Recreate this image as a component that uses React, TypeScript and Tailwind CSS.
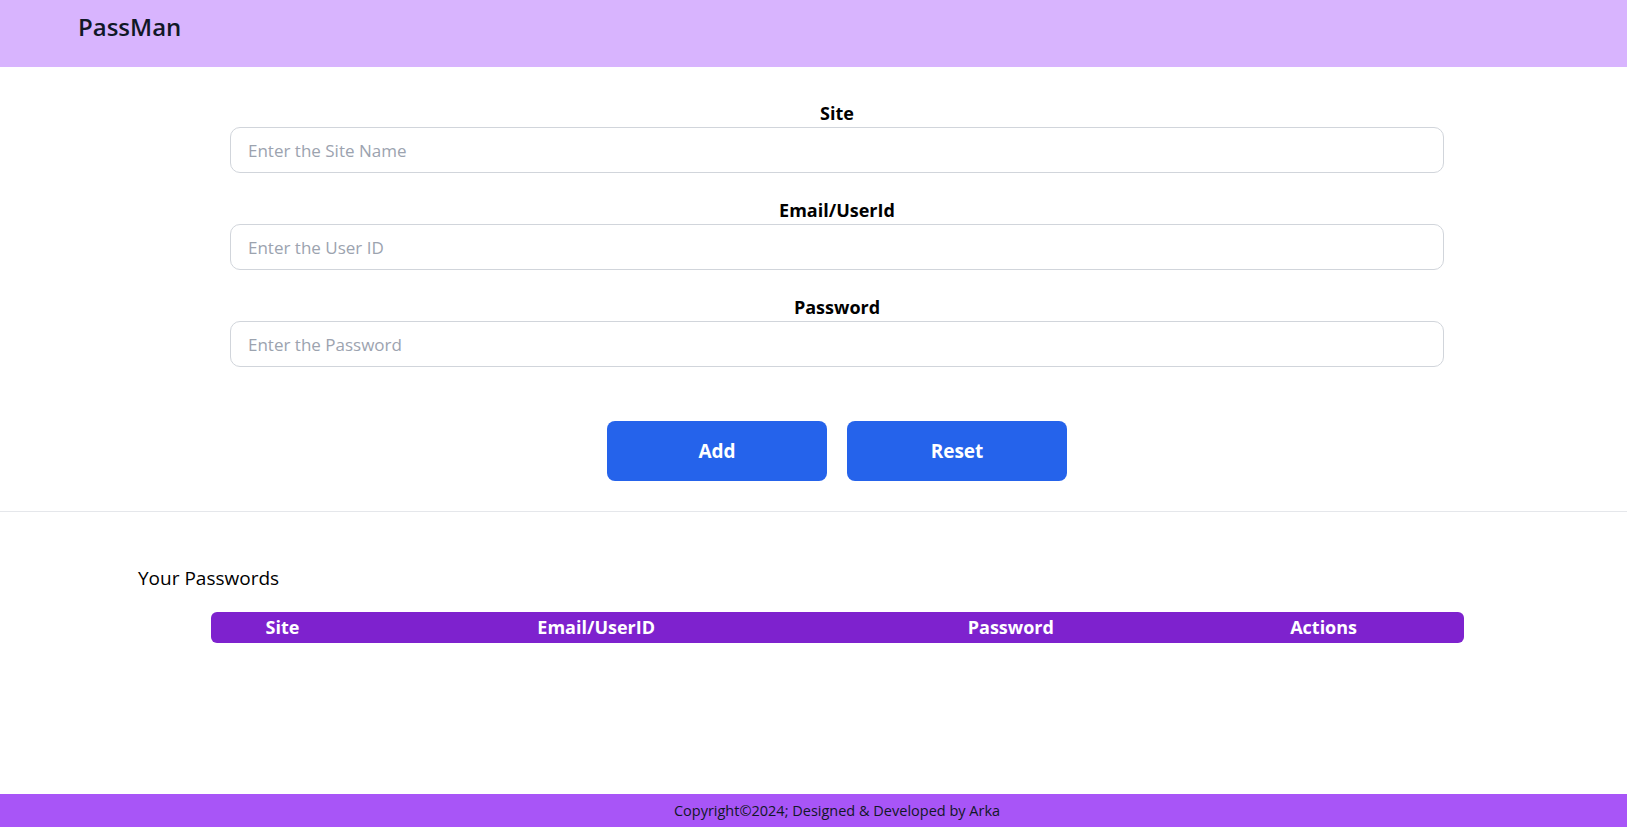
import { useState } from 'react'

const font = { fontFamily: '"Open Sans", "Noto Sans", Arial, sans-serif' }

function Field({
  label,
  placeholder,
  value,
  onChange,
  type = 'text'
}: {
  label: string
  placeholder: string
  value: string
  onChange: (v: string) => void
  type?: string
}) {
  return (
    <div className="flex w-full flex-col items-center">
      <label className="text-[18px] leading-[28px] font-bold text-black">{label}</label>
      <input
        type={type}
        value={value}
        placeholder={placeholder}
        onChange={(e) => onChange(e.target.value)}
        className="h-[46px] w-full rounded-[10px] border border-[#d1d5db] bg-white px-[17px] text-[17px] text-gray-800 outline-none placeholder:text-[#9ca3af]"
      />
    </div>
  )
}

export default function App() {
  const [site, setSite] = useState('')
  const [user, setUser] = useState('')
  const [pass, setPass] = useState('')

  const reset = () => {
    setSite('')
    setUser('')
    setPass('')
  }

  return (
    <div className="flex min-h-[827px] flex-col bg-white text-black" style={font}>
      <nav className="flex h-[67px] shrink-0 items-start bg-[#d8b4fe] pl-[78px] pt-[9px]">
        <span className="text-[24px] font-semibold text-[#111827]">PassMan</span>
      </nav>

      <main className="flex flex-1 flex-col">
        <div className="flex justify-center pl-[47px] pt-[32px]">
          <div className="flex w-[1214px] flex-col gap-[23px]">
            <Field label="Site" placeholder="Enter the Site Name" value={site} onChange={setSite} />
            <Field label="Email/UserId" placeholder="Enter the User ID" value={user} onChange={setUser} />
            <Field
              label="Password"
              placeholder="Enter the Password"
              value={pass}
              onChange={setPass}
              type="password"
            />
          </div>
        </div>

        <div className="flex justify-center gap-[20px] pl-[47px] pt-[54px] pb-[30px]">
          <button className="h-[60px] w-[220px] rounded-lg bg-[#2563eb] text-[19px] font-bold text-white">
            Add
          </button>
          <button
            onClick={reset}
            className="h-[60px] w-[220px] rounded-lg bg-[#2563eb] text-[19px] font-bold text-white"
          >
            Reset
          </button>
        </div>

        <hr className="border-[#e5e7eb]" />

        <section className="pt-[52px]">
          <h2 className="pl-[138px] text-[19px] leading-[28px] font-medium">Your Passwords</h2>
          <div className="flex justify-center pl-[47px] pt-[20px]">
            <table className="w-[1253px] overflow-hidden rounded-md text-[18px]">
              <thead className="bg-[#7e22ce] text-white">
                <tr className="h-[31px]">
                  <th className="w-[144px] font-bold">Site</th>
                  <th className="w-[484px] font-bold">Email/UserID</th>
                  <th className="w-[346px] font-bold">Password</th>
                  <th className="w-[280px] font-bold">Actions</th>
                </tr>
              </thead>
              <tbody></tbody>
            </table>
          </div>
        </section>
      </main>

      <footer className="flex h-[33px] shrink-0 items-center justify-center bg-[#a855f7] pl-[47px] text-[14.5px] text-[#111827]">
        Copyright©2024; Designed &amp; Developed by Arka
      </footer>
    </div>
  )
}
